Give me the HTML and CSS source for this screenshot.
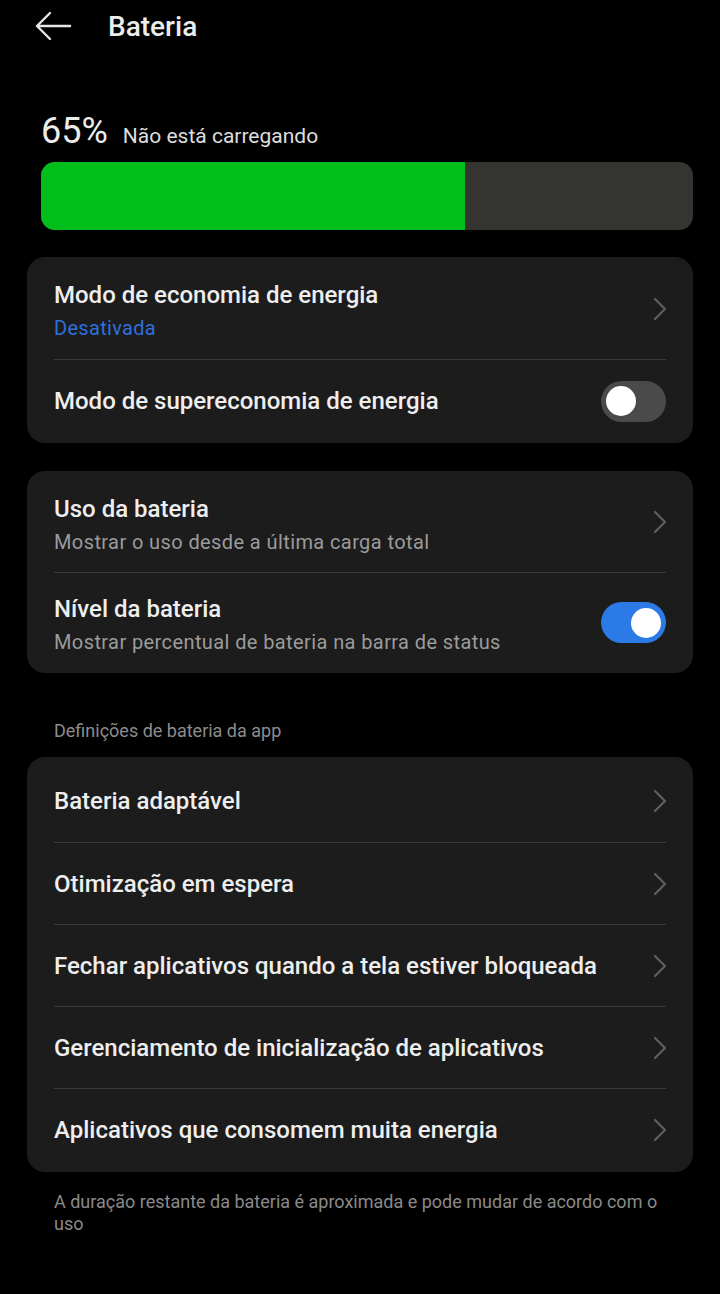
FILE: index.html
```html
<!DOCTYPE html>
<html lang="pt">
<head>
<meta charset="utf-8">
<title>Bateria</title>
<link rel="stylesheet" href="styles.css">
</head>
<body>
<div class="screen">
  <header class="topbar">
    <svg class="back" width="38" height="30" viewBox="0 0 38 30"><path d="M36 15H3M16 2L3 15l13 13" fill="none" stroke="#e6e6e6" stroke-width="2.4" stroke-linecap="round" stroke-linejoin="round"/></svg>
    <h1 class="title">Bateria</h1>
  </header>

  <section class="level">
    <div class="level-text"><span class="pct">65%</span><span class="status">Não está carregando</span></div>
    <div class="bar"><div class="bar-fill" style="width:65%"></div></div>
  </section>

  <div class="card first">
    <div class="row double">
      <div class="texts"><div class="label">Modo de economia de energia</div><div class="sub blue">Desativada</div></div>
      <svg class="chev" width="14" height="24" viewBox="0 0 14 24"><path d="M2 2l10 10L2 22" fill="none" stroke="#5f5f5f" stroke-width="2.2" stroke-linecap="round" stroke-linejoin="round"/></svg>
    </div>
    <div class="row single">
      <div class="texts"><div class="label">Modo de supereconomia de energia</div></div>
      <div class="toggle off"><div class="knob"></div></div>
    </div>
  </div>

  <div class="card second">
    <div class="row double">
      <div class="texts"><div class="label">Uso da bateria</div><div class="sub">Mostrar o uso desde a última carga total</div></div>
      <svg class="chev" width="14" height="24" viewBox="0 0 14 24"><path d="M2 2l10 10L2 22" fill="none" stroke="#5f5f5f" stroke-width="2.2" stroke-linecap="round" stroke-linejoin="round"/></svg>
    </div>
    <div class="row double">
      <div class="texts"><div class="label">Nível da bateria</div><div class="sub">Mostrar percentual de bateria na barra de status</div></div>
      <div class="toggle on"><div class="knob"></div></div>
    </div>
  </div>

  <div class="section-label">Definições de bateria da app</div>

  <div class="card list">
    <div class="row single"><div class="texts"><div class="label">Bateria adaptável</div></div><svg class="chev" width="14" height="24" viewBox="0 0 14 24"><path d="M2 2l10 10L2 22" fill="none" stroke="#5f5f5f" stroke-width="2.2" stroke-linecap="round" stroke-linejoin="round"/></svg></div>
    <div class="row single"><div class="texts"><div class="label">Otimização em espera</div></div><svg class="chev" width="14" height="24" viewBox="0 0 14 24"><path d="M2 2l10 10L2 22" fill="none" stroke="#5f5f5f" stroke-width="2.2" stroke-linecap="round" stroke-linejoin="round"/></svg></div>
    <div class="row single"><div class="texts"><div class="label">Fechar aplicativos quando a tela estiver bloqueada</div></div><svg class="chev" width="14" height="24" viewBox="0 0 14 24"><path d="M2 2l10 10L2 22" fill="none" stroke="#5f5f5f" stroke-width="2.2" stroke-linecap="round" stroke-linejoin="round"/></svg></div>
    <div class="row single"><div class="texts"><div class="label">Gerenciamento de inicialização de aplicativos</div></div><svg class="chev" width="14" height="24" viewBox="0 0 14 24"><path d="M2 2l10 10L2 22" fill="none" stroke="#5f5f5f" stroke-width="2.2" stroke-linecap="round" stroke-linejoin="round"/></svg></div>
    <div class="row single"><div class="texts"><div class="label">Aplicativos que consomem muita energia</div></div><svg class="chev" width="14" height="24" viewBox="0 0 14 24"><path d="M2 2l10 10L2 22" fill="none" stroke="#5f5f5f" stroke-width="2.2" stroke-linecap="round" stroke-linejoin="round"/></svg></div>
  </div>

  <p class="footnote">A duração restante da bateria é aproximada e pode mudar de acordo com o uso</p>
</div>
</body>
</html>
```

FILE: styles.css
```css
* { box-sizing: border-box; }
html, body { margin: 0; padding: 0; background: #000; }
body { font-family: Roboto, "Noto Sans", sans-serif; color: #ececec; }
.screen { width: 720px; min-height: 1294px; background: #000; display: flex; flex-direction: column; }

.topbar { height: 52px; display: flex; align-items: center; padding-left: 34px; gap: 36px; }
.back { display: block; }
.title { margin: 0; font-size: 28px; font-weight: 500; color: #ececec; }

.level { padding: 58px 27px 0 41px; }
.level-text { display: flex; align-items: baseline; gap: 15px; height: 52px; }
.pct { font-size: 36px; font-weight: 400; color: #ececec; }
.status { font-size: 21px; color: #dedede; }
.bar { height: 68px; width: 652px; border-radius: 14px; background: #343431; overflow: hidden; }
.bar-fill { height: 100%; background: #00bf1a; }

.card { margin: 28px 27px 0; background: #1c1c1c; border-radius: 18px; padding: 1px 27px; display: flex; flex-direction: column; }
.card.first { margin-top: 27px; }
.card.list { padding: 3px 27px 2px; }
.row { display: flex; align-items: center; justify-content: space-between; border-top: 1px solid #3a3a3a; }
.row:first-child { border-top: none; }
.row.double { height: 101px; }
.card.second .row.double { height: 100px; }
.row.double .texts { padding-top: 4px; gap: 7px; }
.row.single { height: 83px; }
.card.list .row.single { height: 82px; }
.texts { display: flex; flex-direction: column; gap: 5px; }
.label { font-size: 24px; font-weight: 500; color: #eeeeee; }
.sub { font-size: 20px; letter-spacing: 0.4px; color: #9b9b9b; }
.sub.blue { color: #2e6fdc; letter-spacing: 0.3px; }
.chev { display: block; margin-right: -1px; }

.toggle { width: 65px; height: 41px; border-radius: 21px; position: relative; flex: none; }
.toggle.off { background: #4a4a4a; }
.toggle.on { background: #2b7ae6; }
.knob { position: absolute; top: 5.5px; width: 30px; height: 30px; border-radius: 50%; background: #fff; }
.toggle.off .knob { left: 5px; }
.toggle.on .knob { right: 5px; }

.section-label { padding: 47px 54px 0; font-size: 18px; color: #8c8c8c; height: 84px; }
.section-label + .card { margin-top: 0; }

.footnote { margin: 19px 54px 0; font-size: 18px; line-height: 22px; color: #8a8a8a; }
```
